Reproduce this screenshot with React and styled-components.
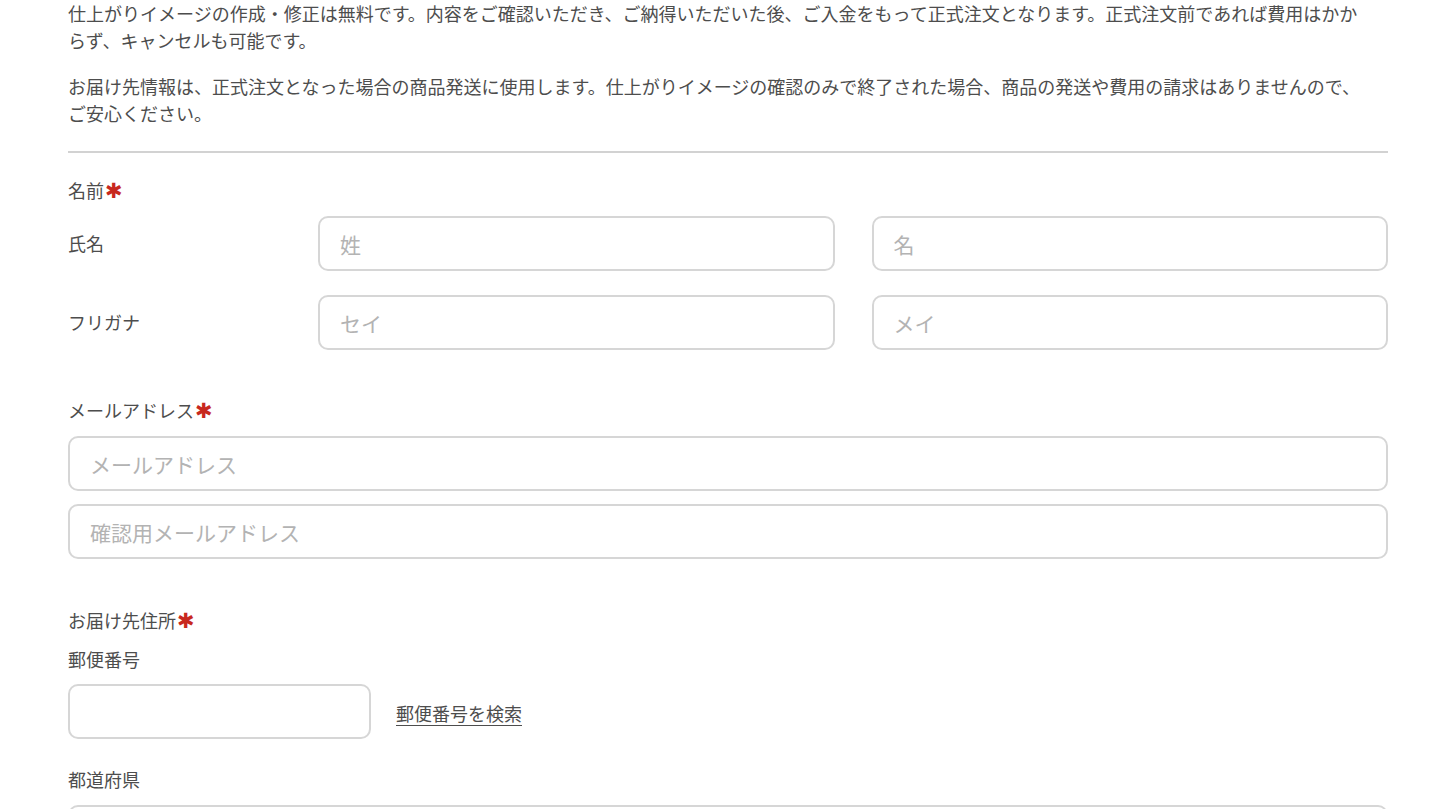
import React from 'react';
import styled, { createGlobalStyle } from 'styled-components';

const GlobalStyle = createGlobalStyle`
  html, body {
    margin: 0;
    padding: 0;
    background: #ffffff;
  }
  body {
    font-family: "Noto Sans CJK JP", "Noto Sans", sans-serif;
    color: #4d4d4d;
  }
`;

const Page = styled.div`
  width: 1320px;
  padding: 0 52px 0 68px;
`;

const Notice = styled.p`
  margin: 0 0 19px;
  padding-right: 14px;
  font-size: 18px;
  line-height: 27px;
`;

const Divider = styled.hr`
  border: 0;
  height: 2px;
  background: #d2d2d2;
  margin: 24px 0 24px;
`;

const Section = styled.section`
  display: flex;
  flex-direction: column;
  gap: ${(p) => p.$gap || 12}px;
  margin-bottom: ${(p) => p.$after || 0}px;
`;

const Label = styled.div`
  font-size: 18px;
  line-height: 27px;
  color: #4d4d4d;
  margin-top: ${(p) => p.$top || 0}px;
`;

const Required = styled.span`
  color: #c8281e;
  font-family: "DejaVu Sans", sans-serif;
  font-size: 21px;
  line-height: 1;
  margin-left: 1px;
`;

const NameRow = styled.div`
  display: flex;
  align-items: center;
`;

const RowLabel = styled(Label)`
  width: 250px;
  flex: none;
`;

const Pair = styled.div`
  flex: 1;
  display: grid;
  grid-template-columns: 1fr 1fr;
  column-gap: 37px;
`;

const Input = styled.input`
  box-sizing: border-box;
  width: ${(p) => p.$width || '100%'};
  height: 55px;
  padding: 0 20px;
  border: 2px solid #d6d6d6;
  border-radius: 10px;
  background: #fff;
  font-family: "Noto Sans CJK JP", "Noto Sans", sans-serif;
  font-size: 21px;
  color: #4d4d4d;
  outline: none;

  &::placeholder {
    color: #b3b3b3;
  }
`;

const ZipRow = styled.div`
  display: flex;
  align-items: center;
  gap: 25px;
`;

const SearchLink = styled.a`
  font-size: 18px;
  line-height: 27px;
  color: #4d4d4d;
  text-decoration: underline;
  text-underline-offset: 4px;
  margin-top: 4px;
  cursor: pointer;
`;

function FieldLabel({ children, required }) {
  return (
    <Label>
      {children}
      {required && <Required>✱</Required>}
    </Label>
  );
}

export default function App() {
  return (
    <Page>
      <GlobalStyle />
      <Notice>
        仕上がりイメージの作成・修正は無料です。内容をご確認いただき、ご納得いただいた後、ご入金をもって正式注文となります。正式注文前であれば費用はかからず、キャンセルも可能です。
      </Notice>
      <Notice>
        お届け先情報は、正式注文となった場合の商品発送に使用します。仕上がりイメージの確認のみで終了された場合、商品の発送や費用の請求はありませんので、ご安心ください。
      </Notice>
      <Divider />

      <Section $after={47}>
        <FieldLabel required>名前</FieldLabel>
        <Section $gap={24}>
          <NameRow>
            <RowLabel>氏名</RowLabel>
            <Pair>
              <Input placeholder="姓" />
              <Input placeholder="名" />
            </Pair>
          </NameRow>
          <NameRow>
            <RowLabel>フリガナ</RowLabel>
            <Pair>
              <Input placeholder="セイ" />
              <Input placeholder="メイ" />
            </Pair>
          </NameRow>
        </Section>
      </Section>

      <Section $after={48}>
        <FieldLabel required>メールアドレス</FieldLabel>
        <Section $gap={13}>
          <Input placeholder="メールアドレス" />
          <Input placeholder="確認用メールアドレス" />
        </Section>
      </Section>

      <Section $gap={12}>
        <FieldLabel required>お届け先住所</FieldLabel>
        <Section $gap={11}>
          <Label>郵便番号</Label>
          <ZipRow>
            <Input $width="303px" />
            <SearchLink>郵便番号を検索</SearchLink>
          </ZipRow>
        </Section>
        <Section>
          <Label $top={15}>都道府県</Label>
          <Input />
        </Section>
      </Section>
    </Page>
  );
}
